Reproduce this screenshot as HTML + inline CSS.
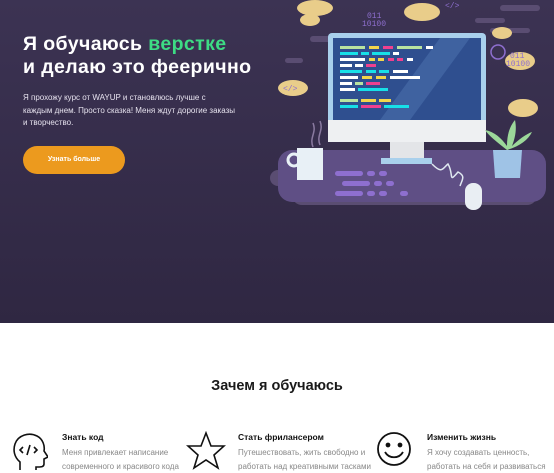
<!DOCTYPE html><html><head><meta charset="utf-8"><style>
body{margin:0;width:554px;height:470px;overflow:hidden;font-family:"Liberation Sans",sans-serif;background:#fff}
.hero{position:absolute;left:0;top:0;width:554px;height:323px;background:linear-gradient(180deg,#3c3353,#2f2742)}
h1{position:absolute;left:23px;top:33px;margin:0;color:#fff;font-size:19.5px;line-height:23px;font-weight:bold;letter-spacing:0.4px}
h1 span{color:#3ddc84}
.p{position:absolute;left:23px;top:92px;width:212px;color:#e6e2ee;font-size:8px;line-height:12.5px}
.btn{position:absolute;left:23px;top:146px;width:102px;height:28px;border-radius:14px;background:#ec9a1e;color:#fff;font-size:7px;font-weight:bold;text-align:center;line-height:28px}
h2{position:absolute;top:378px;width:554px;text-align:center;margin:0;font-size:14.5px;font-weight:bold;color:#1a1a1a}
.f{position:absolute;top:432px}
.f b{display:block;font-size:8.5px;color:#111;margin-bottom:4px}
.f div{font-size:8px;color:#888;line-height:13.5px}
</style></head><body>
<div class="hero">
<h1>Я обучаюсь <span>верстке</span><br>и делаю это феерично</h1>
<div class="p">Я прохожу курс от WAYUP и становлюсь лучше с каждым днем. Просто сказка! Меня ждут дорогие заказы и творчество.</div>
<div class="btn">Узнать больше</div>
<svg style="position:absolute;left:270px;top:0" width="284" height="220">
<g fill="#5a4d72"><rect x="0" y="170" width="275" height="16" rx="8"/><rect x="22" y="185" width="245" height="20" rx="10"/><rect x="40" y="36" width="30" height="6" rx="3"/><rect x="15" y="58" width="18" height="5" rx="2.5"/><rect x="230" y="5" width="40" height="6" rx="3"/><rect x="205" y="18" width="30" height="5" rx="2.5"/><rect x="220" y="28" width="40" height="5" rx="2.5"/></g>
<rect x="8" y="150" width="268" height="52" rx="14" fill="#5f4f85"/>
<g fill="#8e6fcf"><rect x="65" y="171" width="28" height="5" rx="2.5"/><rect x="97" y="171" width="8" height="5" rx="2.5"/><rect x="109" y="171" width="8" height="5" rx="2.5"/><rect x="72" y="181" width="28" height="5" rx="2.5"/><rect x="104" y="181" width="8" height="5" rx="2.5"/><rect x="116" y="181" width="8" height="5" rx="2.5"/><rect x="65" y="191" width="28" height="5" rx="2.5"/><rect x="97" y="191" width="8" height="5" rx="2.5"/><rect x="109" y="191" width="8" height="5" rx="2.5"/><rect x="130" y="191" width="8" height="5" rx="2.5"/></g>
<rect x="58" y="33" width="158" height="109" rx="4" fill="#a9d0ec"/>
<rect x="63" y="38" width="148" height="82" fill="#2f4f8f"/>
<polygon points="110,120 170,38 200,38 140,120" fill="#3f62a0"/>
<rect x="58" y="120" width="158" height="22" fill="#eef0f2"/>
<rect x="120" y="142" width="34" height="16" fill="#e3e5e8"/>
<rect x="111" y="158" width="51" height="6" fill="#a9d0ec"/>
<g><rect x="70" y="46" width="25" height="3" fill="#b8e3a0"/><rect x="99" y="46" width="10" height="3" fill="#f2d64b"/><rect x="113" y="46" width="10" height="3" fill="#f0408f"/><rect x="127" y="46" width="25" height="3" fill="#b8e3a0"/><rect x="156" y="46" width="7" height="3" fill="#fff"/>
<rect x="70" y="52" width="18" height="3" fill="#17e0e8"/><rect x="91" y="52" width="8" height="3" fill="#17e0e8"/><rect x="102" y="52" width="18" height="3" fill="#17e0e8"/><rect x="123" y="52" width="6" height="3" fill="#fff"/>
<rect x="70" y="58" width="25" height="3" fill="#fff"/><rect x="99" y="58" width="6" height="3" fill="#f2d64b"/><rect x="108" y="58" width="6" height="3" fill="#f2d64b"/><rect x="118" y="58" width="6" height="3" fill="#f0408f"/><rect x="127" y="58" width="6" height="3" fill="#f0408f"/><rect x="137" y="58" width="6" height="3" fill="#fff"/>
<rect x="70" y="64" width="12" height="3" fill="#fff"/><rect x="85" y="64" width="8" height="3" fill="#fff"/><rect x="96" y="64" width="10" height="3" fill="#f0408f"/>
<rect x="70" y="70" width="22" height="3" fill="#17e0e8"/><rect x="96" y="70" width="10" height="3" fill="#17e0e8"/><rect x="109" y="70" width="10" height="3" fill="#17e0e8"/><rect x="123" y="70" width="15" height="3" fill="#fff"/>
<rect x="70" y="76" width="18" height="3" fill="#fff"/><rect x="92" y="76" width="10" height="3" fill="#f2d64b"/><rect x="106" y="76" width="10" height="3" fill="#f2d64b"/><rect x="120" y="76" width="30" height="3" fill="#fff"/>
<rect x="70" y="82" width="12" height="3" fill="#fff"/><rect x="85" y="82" width="8" height="3" fill="#b8e3a0"/><rect x="96" y="82" width="14" height="3" fill="#f0408f"/>
<rect x="70" y="88" width="15" height="3" fill="#fff"/><rect x="88" y="88" width="30" height="3" fill="#17e0e8"/>
<rect x="70" y="99" width="18" height="3" fill="#b8e3a0"/><rect x="91" y="99" width="15" height="3" fill="#f2d64b"/><rect x="109" y="99" width="12" height="3" fill="#f2d64b"/>
<rect x="70" y="105" width="18" height="3" fill="#17e0e8"/><rect x="91" y="105" width="20" height="3" fill="#f0408f"/><rect x="114" y="105" width="25" height="3" fill="#17e0e8"/></g>
<rect x="27" y="148" width="26" height="32" fill="#e8f0f6"/><circle cx="24" cy="160" r="6" fill="none" stroke="#e8f0f6" stroke-width="3"/>
<path d="M43 147c-4-10 4-14 0-24M50 145c-4-10 4-14 0-24" stroke="#8a7aa0" fill="none" stroke-width="1.5"/>
<polygon points="223,150 252,150 250,178 225,178" fill="#9fc3e6"/>
<path d="M237 150c-10-8-18-14-22-20 10 2 16 8 22 16 0-12 3-20 8-26 2 10 0 18-3 26 6-6 14-12 20-14-4 8-12 14-25 18z" fill="#9cd89a"/>
<path d="M162 164c10 10 10 5 16 0 6 10 0 20 10 8 8 4 4 8 2 14" stroke="#dfe8f0" fill="none" stroke-width="1.5"/>
<rect x="195" y="183" width="17" height="27" rx="8" fill="#e9eef3"/>
<g fill="#e9cd8a"><ellipse cx="45" cy="8" rx="18" ry="8"/><ellipse cx="40" cy="20" rx="10" ry="6"/><ellipse cx="23" cy="88" rx="15" ry="8"/><ellipse cx="152" cy="12" rx="18" ry="9"/><ellipse cx="232" cy="33" rx="10" ry="6"/><ellipse cx="250" cy="61" rx="15" ry="9"/><ellipse cx="253" cy="108" rx="15" ry="9"/></g>
<g fill="#8e6fcf" font-size="8" font-family="Liberation Mono,monospace"><text x="13" y="91">&lt;/&gt;</text><text x="97" y="18">011</text><text x="92" y="26">10100</text><text x="240" y="58">011</text><text x="236" y="66">10100</text><text x="175" y="8">&lt;/&gt;</text></g>
<circle cx="228" cy="52" r="7" fill="none" stroke="#8e6fcf" stroke-width="1.5"/>
</svg>
</div>
<h2>Зачем я обучаюсь</h2>
<svg style="position:absolute;left:12px;top:432px" width="36" height="38" fill="none" stroke="#111" stroke-width="1.6"><path d="M8 38v-8C2 25 1 18 3 12 6 3 17 0 25 4c6 3 8 10 7 15l4 6-4 2v5c0 3-3 3-6 3h-2v3"/><path d="M11 15l-3 3 3 3M22 15l3 3-3 3M18 13l-3 10"/></svg>
<div class="f" style="left:62px"><b>Знать код</b><div>Меня привлекает написание<br>современного и красивого кода</div></div>
<svg style="position:absolute;left:186px;top:431px" width="40" height="39" fill="none" stroke="#111" stroke-width="1.6"><polygon points="20,2 25,15 38,15 28,24 32,37 20,29 8,37 12,24 2,15 15,15"/></svg>
<div class="f" style="left:238px"><b>Стать фрилансером</b><div>Путешествовать, жить свободно и<br>работать над креативными тасками</div></div>
<svg style="position:absolute;left:376px;top:431px" width="36" height="36" fill="none" stroke="#111" stroke-width="1.8"><circle cx="18" cy="18" r="16"/><circle cx="12" cy="14" r="1.5" fill="#111"/><circle cx="24" cy="14" r="1.5" fill="#111"/><path d="M9 21c4 7 14 7 18 0"/></svg>
<div class="f" style="left:427px"><b>Изменить жизнь</b><div>Я хочу создавать ценность,<br>работать на себя и развиваться</div></div>
</body></html>
